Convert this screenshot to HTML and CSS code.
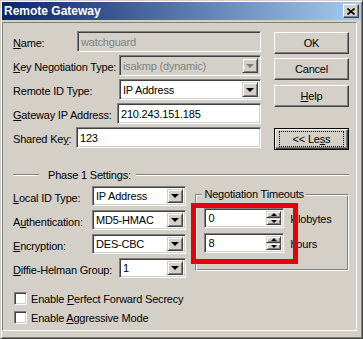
FILE: index.html
```html
<!DOCTYPE html>
<html lang="en">
<head>
    <meta charset="UTF-8">
    <title>Remote Gateway</title>
    <link rel="stylesheet" href="styles.css">
</head>
<body>
    <div class="window">
        <div class="titlebar">
            <span class="title">Remote Gateway</span>
            <span class="close">
                <svg width="8" height="7" viewBox="0 0 8 7"><path d="M0.5 0.5 L7.5 6.5 M7.5 0.5 L0.5 6.5" stroke="#000" stroke-width="1.6" fill="none"/></svg>
            </span>
        </div>
        <div class="panel">
            <div class="top">
                <div class="fields">
                    <div class="row">
                        <span class="lbl w-name"><u>N</u>ame:</span>
                        <div class="field disabled"><span class="val">watchguard</span></div>
                    </div>
                    <div class="row">
                        <span class="lbl w-key"><u>K</u>ey Negotiation Type:</span>
                        <div class="field combo disabled"><span class="val">isakmp (dynamic)</span><span class="drop"><i class="tri"></i></span></div>
                    </div>
                    <div class="row">
                        <span class="lbl w-key">Remote ID Type:</span>
                        <div class="field combo"><span class="val">IP Address</span><span class="drop"><i class="tri"></i></span></div>
                    </div>
                    <div class="row">
                        <span class="lbl w-gw"><u>G</u>ateway IP Address:</span>
                        <div class="field"><span class="val">210.243.151.185</span></div>
                    </div>
                    <div class="row">
                        <span class="lbl w-shared">Shared Ke<u>y</u>:</span>
                        <div class="field"><span class="val">123</span></div>
                    </div>
                </div>
                <div class="buttons">
                    <div class="btn btn-ok">OK</div>
                    <div class="btn btn-cancel">Cancel</div>
                    <div class="btn btn-help"><u>H</u>elp</div>
                    <div class="btn btn-less default"><span class="focus">&lt;&lt; Le<u>s</u>s</span></div>
                </div>
            </div>

            <div class="section">
                <span class="rule short"></span>
                <span class="section-title">Phase 1 Settings:</span>
                <span class="rule"></span>
            </div>

            <div class="lower">
                <div class="settings">
                    <div class="row">
                        <span class="lbl w-local"><u>L</u>ocal ID Type:</span>
                        <div class="field combo"><span class="val">IP Address</span><span class="drop"><i class="tri"></i></span></div>
                    </div>
                    <div class="row">
                        <span class="lbl w-local">A<u>u</u>thentication:</span>
                        <div class="field combo"><span class="val">MD5-HMAC</span><span class="drop"><i class="tri"></i></span></div>
                    </div>
                    <div class="row">
                        <span class="lbl w-local"><u>E</u>ncryption:</span>
                        <div class="field combo"><span class="val">DES-CBC</span><span class="drop"><i class="tri"></i></span></div>
                    </div>
                    <div class="row">
                        <span class="lbl w-dh"><u>D</u>iffie-Helman Group:</span>
                        <div class="field combo"><span class="val">1</span><span class="drop"><i class="tri"></i></span></div>
                    </div>
                </div>

                <div class="group">
                    <div class="group-head"><span class="group-title">Negotiation Timeouts</span></div>
                    <div class="spin-row">
                        <div class="field spin"><span class="val">0</span><span class="spin-btns"><span class="sb"><i class="tri-up"></i></span><span class="sb"><i class="tri-sm"></i></span></span></div>
                        <span class="unit">kilobytes</span>
                    </div>
                    <div class="spin-row">
                        <div class="field spin"><span class="val">8</span><span class="spin-btns"><span class="sb"><i class="tri-up"></i></span><span class="sb"><i class="tri-sm"></i></span></span></div>
                        <span class="unit">hours</span>
                    </div>
                    <div class="highlight"></div>
                </div>
            </div>

            <div class="checks">
                <div class="check"><span class="box"></span><span>Enable <u>P</u>erfect Forward Secrecy</span></div>
                <div class="check"><span class="box"></span><span>Enable <u>A</u>ggressive Mode</span></div>
            </div>
        </div>
    </div>
</body>
</html>
```

FILE: styles.css
```css
body {
    margin: 0;
    background-color: #D4D0C8;
    font-family: "Liberation Sans", Arial, sans-serif;
    font-size: 11px;
    letter-spacing: -0.2px;
    color: #000;
}
.window {
    box-sizing: border-box;
    width: 363px;
    height: 339px;
    padding: 1px;
    background-color: #D4D0C8;
    border: 1px solid;
    border-color: #D4D0C8 #404040 #404040 #D4D0C8;
    box-shadow: inset 1px 1px #FFFFFF, inset -1px -1px #808080;
    display: flex;
    flex-direction: column;
}
.titlebar {
    height: 18px;
    display: flex;
    align-items: center;
    justify-content: space-between;
    padding: 0 2px 0 2px;
    background: linear-gradient(to right, #0A246A, #A6CAF0);
}
.title {
    color: #FFFFFF;
    font-weight: bold;
    font-size: 12px;
    letter-spacing: 0;
}
.close {
    box-sizing: border-box;
    width: 16px;
    height: 14px;
    display: flex;
    align-items: center;
    justify-content: center;
    background-color: #D4D0C8;
    border: 1px solid;
    border-color: #FFFFFF #404040 #404040 #FFFFFF;
    box-shadow: inset -1px -1px #808080;
}
.panel {
    box-sizing: border-box;
    width: 355px;
    height: 309px;
    margin-top: 2px;
    padding: 8px 7px 0 10px;
    border: 1px solid;
    border-color: #808080 #FFFFFF #FFFFFF #808080;
}
.top {
    display: flex;
}
.fields {
    width: 248px;
    display: flex;
    flex-direction: column;
    gap: 3px;
}
.row {
    display: flex;
    align-items: center;
    height: 21px;
}
.lbl {
    flex: none;
    padding-top: 3px;
    white-space: nowrap;
}
.w-name { width: 64px; }
.w-key { width: 106px; }
.w-gw { width: 104px; }
.w-shared { width: 63px; }
.w-local { width: 79px; }
.w-dh { width: 106px; }

.field {
    box-sizing: border-box;
    flex: 1;
    height: 100%;
    display: flex;
    align-items: center;
    background-color: #FFFFFF;
    border: 1px solid;
    border-color: #808080 #FFFFFF #FFFFFF #808080;
    box-shadow: inset 1px 1px #404040, inset -1px -1px #D4D0C8;
    padding: 2px;
    white-space: nowrap;
}
.field .val {
    flex: 1;
    padding-left: 1px;
}
.field.disabled {
    background-color: #D4D0C8;
    color: #808080;
}
.drop {
    box-sizing: border-box;
    width: 16px;
    height: 100%;
    display: flex;
    align-items: center;
    justify-content: center;
    background-color: #D4D0C8;
    border: 1px solid;
    border-color: #D4D0C8 #404040 #404040 #D4D0C8;
    box-shadow: inset 1px 1px #FFFFFF, inset -1px -1px #808080;
}
.tri {
    width: 0;
    height: 0;
    border-left: 4px solid transparent;
    border-right: 4px solid transparent;
    border-top: 4px solid #000;
}
.disabled .tri {
    border-top-color: #808080;
}
.buttons {
    margin-left: 13px;
    width: 75px;
    display: flex;
    flex-direction: column;
}
.btn {
    box-sizing: border-box;
    height: 22px;
    display: flex;
    align-items: center;
    justify-content: center;
    border: 1px solid;
    border-color: #FFFFFF #404040 #404040 #FFFFFF;
    box-shadow: inset -1px -1px #808080;
}
.btn-ok { margin-top: 1px; }
.btn-cancel { margin-top: 4px; }
.btn-help { margin-top: 5px; }
.btn-less { margin-top: 21px; }
.btn.default {
    border-color: #000;
    box-shadow: inset 1px 1px #FFFFFF, inset -1px -1px #404040, inset -2px -2px #808080;
}
.focus {
    box-sizing: border-box;
    width: 63px;
    height: 14px;
    display: flex;
    align-items: center;
    justify-content: center;
    outline: 1px dotted #000;
}
.section {
    display: flex;
    align-items: center;
    height: 13px;
    margin-top: 18px;
}
.rule {
    flex: 1;
    height: 0;
    border-top: 1px solid #808080;
    border-bottom: 1px solid #FFFFFF;
}
.rule.short {
    flex: none;
    width: 26px;
}
.section-title {
    margin: 0 5px 0 9px;
}
.lower {
    display: flex;
    align-items: flex-start;
    margin-top: 5px;
}
.settings {
    width: 174px;
    display: flex;
    flex-direction: column;
    gap: 4px;
}
.settings .row {
    height: 20px;
}
.group {
    position: relative;
    box-sizing: border-box;
    width: 154px;
    height: 77px;
    margin: 8px 0 0 9px;
    padding: 0 0 0 8px;
    border: 1px solid;
    border-color: #808080 #FFFFFF #FFFFFF #808080;
    box-shadow: inset 1px 1px #FFFFFF, inset -1px -1px #808080;
}
.group-head {
    height: 13px;
    margin: -7px 0 0 -2px;
    display: flex;
}
.group-title {
    padding: 0 2px;
    background-color: #D4D0C8;
    line-height: 13px;
}
.spin-row {
    display: flex;
    align-items: center;
    height: 20px;
    margin-top: 5px;
}
.group-head + .spin-row {
    margin-top: 7px;
}
.spin {
    flex: none;
    width: 80px;
    padding-right: 2px;
}
.spin-btns {
    width: 15px;
    height: 100%;
    display: flex;
    flex-direction: column;
}
.sb {
    box-sizing: border-box;
    flex: 1;
    display: flex;
    align-items: center;
    justify-content: center;
    background-color: #D4D0C8;
    border: 1px solid;
    border-color: #D4D0C8 #404040 #404040 #D4D0C8;
    box-shadow: inset 1px 1px #FFFFFF, inset -1px -1px #808080;
}
.tri-up,
.tri-sm {
    width: 0;
    height: 0;
    border-left: 3px solid transparent;
    border-right: 3px solid transparent;
}
.tri-up { border-bottom: 3px solid #000; }
.tri-sm { border-top: 3px solid #000; }
.unit {
    margin-left: 6px;
    padding-top: 2px;
}
.highlight {
    position: absolute;
    left: -5px;
    top: 8px;
    box-sizing: border-box;
    width: 107px;
    height: 61px;
    border: 5px solid #E80008;
}
.checks {
    margin-top: 11px;
    padding-left: 1px;
}
.check {
    display: flex;
    align-items: center;
    height: 19px;
}
.box {
    box-sizing: border-box;
    width: 13px;
    height: 13px;
    margin-right: 4px;
    background-color: #FFFFFF;
    border: 1px solid;
    border-color: #808080 #FFFFFF #FFFFFF #808080;
    box-shadow: inset 1px 1px #404040, inset -1px -1px #D4D0C8;
}
```
